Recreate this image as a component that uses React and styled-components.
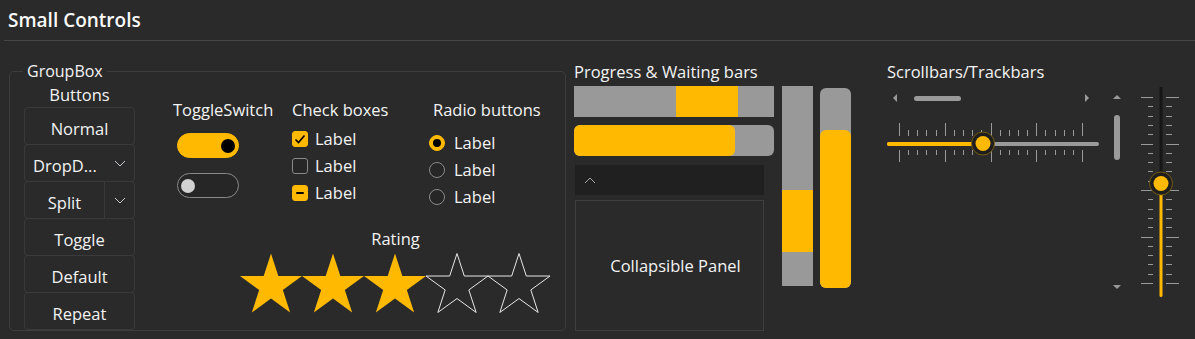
import React from "react";
import styled, { createGlobalStyle } from "styled-components";

const ACCENT = "#ffb900";

const GlobalStyle = createGlobalStyle`
	body {
		margin: 0;
		background: #2a2a2a;
		color: #f3f3f3;
		font-family: "Open Sans", "Liberation Sans", sans-serif;
		font-size: 16.5px;
	}
`;

const Page = styled.div`
	width: 1195px;
	height: 339px;
	overflow: hidden;
`;

const Header = styled.div`
	margin-left: 4px;
	height: 40px;
	border-bottom: 1px solid #464646;
	display: flex;
	align-items: center;
	padding-left: 4px;
`;

const Title = styled.h1`
	margin: 0;
	font-size: 19px;
	font-weight: 600;
	color: #fafafa;
`;

const Content = styled.div`
	display: flex;
	align-items: flex-start;
	padding-left: 9px;
`;

// GroupBox
const GroupBox = styled.fieldset`
	box-sizing: border-box;
	margin: 20px 0 0 0;
	padding: 0;
	width: 557px;
	height: 270px;
	border: 1px solid #3d3d3d;
	border-radius: 5px;
	min-width: 0;
`;

const Legend = styled.legend`
	margin-left: 13px;
	padding: 0 4px;
	line-height: 20px;
	font-size: 16px;
`;

const GroupInner = styled.div`
	display: flex;
	align-items: flex-start;
`;

const ButtonsCol = styled.div`
	margin-left: 14px;
	width: 111px;
	display: flex;
	flex-direction: column;
`;

const ColLabel = styled.div`
	line-height: 22px;
	text-align: ${(p) => p.$align || "left"};
	padding-left: ${(p) => p.$indent || 0}px;
	white-space: nowrap;
`;

const ButtonsLabel = styled(ColLabel)`
	margin-top: 3px;
`;

const ButtonStack = styled.div`
	margin-top: 1px;
	display: flex;
	flex-direction: column;
`;

const Btn = styled.div`
	box-sizing: border-box;
	height: 38px;
	border: 1px solid #3a3a3a;
	border-radius: 4px;
	display: flex;
	align-items: center;
	justify-content: center;
	padding-top: 4px;
	& + & {
		margin-top: -1px;
	}
`;

const DropBtn = styled(Btn)`
	justify-content: space-between;
	padding-left: 8px;
`;

const SplitMain = styled.div`
	flex: 1;
	align-self: stretch;
	margin-top: -4px;
	padding-top: 4px;
	display: flex;
	align-items: center;
	justify-content: center;
	border-right: 1px solid #3a3a3a;
`;

const ArrowPart = styled.div`
	width: 29px;
	margin-top: -4px;
	display: flex;
	align-items: center;
	justify-content: center;
`;

const RightArea = styled.div`
	padding-top: 18px;
	display: flex;
	flex-direction: column;
`;

const ControlsRow = styled.div`
	display: flex;
	align-items: flex-start;
`;

const ToggleCol = styled.div`
	margin-left: 38px;
	width: 119px;
	display: flex;
	flex-direction: column;
`;

const Toggle = styled.div`
	box-sizing: border-box;
	margin-left: 4px;
	margin-top: ${(p) => p.$gap}px;
	width: 62px;
	height: 25px;
	border-radius: 13px;
	background: ${(p) => (p.$on ? ACCENT : "#262626")};
	border: 1px solid ${(p) => (p.$on ? ACCENT : "#8a8a8a")};
	display: flex;
	align-items: center;
	justify-content: ${(p) => (p.$on ? "flex-end" : "flex-start")};
	padding: 0 3px;
`;

const Knob = styled.div`
	width: 14px;
	height: 14px;
	border-radius: 50%;
	background: ${(p) => (p.$on ? "#000" : "#d2d2d2")};
`;

const CheckCol = styled.div`
	width: 137px;
	display: flex;
	flex-direction: column;
`;

const ItemList = styled.div`
	margin-top: ${(p) => p.$top}px;
	display: flex;
	flex-direction: column;
`;

const ItemRow = styled.div`
	height: 27px;
	display: flex;
	align-items: center;
	gap: ${(p) => p.$gap}px;
`;

const Box = styled.div`
	box-sizing: border-box;
	width: 16px;
	height: 16px;
	border-radius: 3px;
	background: ${(p) => (p.$state ? ACCENT : "#262626")};
	border: 1px solid ${(p) => (p.$state ? ACCENT : "#8a8a8a")};
	display: flex;
	align-items: center;
	justify-content: center;
`;

const Dash = styled.div`
	width: 8px;
	height: 2px;
	border-radius: 1px;
	background: #000;
`;

const RadioCol = styled.div`
	display: flex;
	flex-direction: column;
`;

const Radio = styled.div`
	box-sizing: border-box;
	width: 16px;
	height: 16px;
	border-radius: 50%;
	background: ${(p) => (p.$on ? ACCENT : "#262626")};
	border: 1px solid ${(p) => (p.$on ? ACCENT : "#8a8a8a")};
	display: flex;
	align-items: center;
	justify-content: center;
	&::after {
		content: "";
		display: ${(p) => (p.$on ? "block" : "none")};
		width: 8px;
		height: 8px;
		border-radius: 50%;
		background: #000;
	}
`;

const RatingBlock = styled.div`
	margin-left: 105px;
	margin-top: 18px;
	width: 311px;
	display: flex;
	flex-direction: column;
`;

const Stars = styled.div`
	margin-top: 3px;
	display: flex;
`;

// Progress section
const Section = styled.div`
	margin-left: ${(p) => p.$left}px;
	margin-top: 20px;
	display: flex;
	flex-direction: ${(p) => p.$dir || "column"};
	align-items: flex-start;
`;

const SectionTitle = styled.div`
	line-height: 22px;
	white-space: nowrap;
`;

const BarsRow = styled.div`
	display: flex;
	align-items: flex-start;
`;

const BarsCol = styled.div`
	width: 200px;
	display: flex;
	flex-direction: column;
`;

const HBar = styled.div`
	margin-top: ${(p) => p.$top}px;
	height: 31px;
	background: #999;
	border-radius: ${(p) => (p.$round ? 6 : 0)}px;
	display: flex;
`;

const Fill = styled.div`
	background: ${ACCENT};
	border-radius: ${(p) => (p.$round ? 6 : 0)}px;
`;

const ExpanderHeader = styled.div`
	margin-top: 9px;
	margin-left: 1px;
	width: 189px;
	height: 30px;
	background: #202020;
	display: flex;
	align-items: center;
	padding-left: 9px;
	box-sizing: border-box;
`;

const Panel = styled.div`
	box-sizing: border-box;
	margin-top: 5px;
	margin-left: 1px;
	width: 189px;
	height: 131px;
	border: 1px solid #3f3f3f;
	display: flex;
	align-items: center;
	justify-content: center;
	padding-left: 12px;
`;

const VBar = styled.div`
	margin-left: ${(p) => p.$left}px;
	margin-top: ${(p) => p.$top}px;
	width: 31px;
	height: 200px;
	background: #999;
	border-radius: ${(p) => (p.$round ? 6 : 0)}px;
	display: flex;
	flex-direction: column;
`;

// Scrollbars section
const ScrollLeft = styled.div`
	width: 212px;
	display: flex;
	flex-direction: column;
`;

const HScroll = styled.div`
	margin-top: 8px;
	height: 14px;
	display: flex;
	align-items: center;
	padding: 0 10px 0 6px;
`;

const Arrow = styled.div`
	width: 0;
	height: 0;
	border-style: solid;
	border-color: transparent;
	${(p) =>
		p.$dir === "left" &&
		`border-width: 4px 4px 4px 0; border-right-color: #9a9a9a;`}
	${(p) =>
		p.$dir === "right" &&
		`border-width: 4px 0 4px 4px; border-left-color: #9a9a9a; margin-left: auto;`}
	${(p) =>
		p.$dir === "up" &&
		`border-width: 0 4px 4px 4px; border-bottom-color: #9a9a9a;`}
	${(p) =>
		p.$dir === "down" &&
		`border-width: 4px 4px 0 4px; border-top-color: #9a9a9a; margin-top: auto;`}
`;

const HThumb = styled.div`
	margin-left: 17px;
	width: 47px;
	height: 5px;
	border-radius: 3px;
	background: #9a9a9a;
`;

const VScroll = styled.div`
	margin-left: 11px;
	margin-top: 34px;
	width: 14px;
	height: 194px;
	display: flex;
	flex-direction: column;
	align-items: center;
`;

const VThumb = styled.div`
	margin-top: 16px;
	width: 6px;
	height: 45px;
	border-radius: 3px;
	background: #9a9a9a;
`;

const TrackSvg = styled.svg`
	display: block;
	margin-top: ${(p) => p.$top}px;
	margin-left: ${(p) => p.$left || 0}px;
	flex-shrink: 0;
`;

const Chevron = ({ up }) => (
	<svg width="12" height="7" viewBox="0 0 12 7">
		<path
			d={up ? "M1 6 L6 1 L11 6" : "M1 1 L6 6 L11 1"}
			fill="none"
			stroke={up ? "#a8a8a8" : "#c8ccd2"}
			strokeWidth="1"
		/>
	</svg>
);

const starPoints = () => {
	const R = 32.6;
	const r = R * 0.382;
	const cx = 31;
	const cy = R + 0.5;
	const pts = [];
	for (let i = 0; i < 10; i++) {
		const a = ((-90 + i * 36) * Math.PI) / 180;
		const rad = i % 2 === 0 ? R : r;
		pts.push(`${(cx + rad * Math.cos(a)).toFixed(2)},${(cy + rad * Math.sin(a)).toFixed(2)}`);
	}
	return pts.join(" ");
};

const Star = ({ filled }) => (
	<svg width="62" height="60" viewBox="0 0 62 60">
		<polygon
			points={starPoints()}
			fill={filled ? ACCENT : "none"}
			stroke={filled ? "none" : "#e8e8e8"}
			strokeWidth="1"
		/>
	</svg>
);

const HTrackbar = () => {
	const ticks = Array.from({ length: 21 }, (_, i) => i);
	return (
		<TrackSvg $top={16} width="212" height="44" viewBox="0 0 212 44">
			{ticks.map((i) => {
				const x = 12.5 + Math.round(i * 9.15);
				const long = i % 5 === 0;
				return (
					<g key={i} stroke="#9a9a9a" strokeWidth="1">
						<line x1={x} y1={long ? 2 : 9} x2={x} y2={15} />
						<line x1={x} y1={29} x2={x} y2={long ? 41 : 34} />
					</g>
				);
			})}
			<rect x="0" y="21" width="212" height="4" rx="2" fill="#9a9a9a" />
			<rect x="0" y="21" width="95" height="4" rx="2" fill={ACCENT} />
			<circle cx="96" cy="22.5" r="11.5" fill="#1e1e1e" stroke="#8a6a10" strokeWidth="0.8" />
			<circle cx="96" cy="22.5" r="7.5" fill={ACCENT} />
		</TrackSvg>
	);
};

const VTrackbar = () => {
	const ticks = Array.from({ length: 21 }, (_, i) => i);
	return (
		<TrackSvg $top={24} $left={14} width="46" height="215" viewBox="0 0 46 215">
			{ticks.map((i) => {
				const y = 12.5 + Math.round(i * 9.3);
				const long = i % 5 === 0;
				return (
					<g key={i} stroke="#9a9a9a" strokeWidth="1">
						<line x1={long ? 3 : 10} y1={y} x2={15} y2={y} />
						<line x1={28} y1={y} x2={long ? 41 : 34} y2={y} />
					</g>
				);
			})}
			<rect x="21.5" y="2" width="3" height="100" fill="#161616" />
			<rect x="21.5" y="98" width="3" height="114" rx="1.5" fill={ACCENT} />
			<circle cx="23" cy="98.5" r="11.5" fill="#1e1e1e" stroke="#8a6a10" strokeWidth="0.8" />
			<circle cx="23" cy="98.5" r="7.5" fill={ACCENT} />
		</TrackSvg>
	);
};

const App = () => {
	return (
		<Page>
			<GlobalStyle />
			<Header>
				<Title>Small Controls</Title>
			</Header>
			<Content>
				<GroupBox>
					<Legend>GroupBox</Legend>
					<GroupInner>
						<ButtonsCol>
							<ButtonsLabel $align="center">Buttons</ButtonsLabel>
							<ButtonStack>
								<Btn>Normal</Btn>
								<DropBtn>
									<span>DropD...</span>
									<ArrowPart>
										<Chevron />
									</ArrowPart>
								</DropBtn>
								<Btn>
									<SplitMain>Split</SplitMain>
									<ArrowPart>
										<Chevron />
									</ArrowPart>
								</Btn>
								<Btn>Toggle</Btn>
								<Btn>Default</Btn>
								<Btn>Repeat</Btn>
							</ButtonStack>
						</ButtonsCol>
						<RightArea>
							<ControlsRow>
								<ToggleCol>
									<ColLabel>ToggleSwitch</ColLabel>
									<Toggle $on $gap={12}>
										<Knob $on />
									</Toggle>
									<Toggle $gap={15}>
										<Knob />
									</Toggle>
								</ToggleCol>
								<CheckCol>
									<ColLabel>Check boxes</ColLabel>
									<ItemList $top={4}>
										<ItemRow $gap={7}>
											<Box $state="checked">
												<svg width="14" height="14" viewBox="0 0 14 14">
													<path d="M2.5 7.5 L5.5 10.5 L11.5 3.5" fill="none" stroke="#000" strokeWidth="1.6" />
												</svg>
											</Box>
											Label
										</ItemRow>
										<ItemRow $gap={7}>
											<Box />
											Label
										</ItemRow>
										<ItemRow $gap={7}>
											<Box $state="mixed">
												<Dash />
											</Box>
											Label
										</ItemRow>
									</ItemList>
								</CheckCol>
								<RadioCol>
									<ColLabel $indent={4}>Radio buttons</ColLabel>
									<ItemList $top={8}>
										<ItemRow $gap={9}>
											<Radio $on />
											Label
										</ItemRow>
										<ItemRow $gap={9}>
											<Radio />
											Label
										</ItemRow>
										<ItemRow $gap={9}>
											<Radio />
											Label
										</ItemRow>
									</ItemList>
								</RadioCol>
							</ControlsRow>
							<RatingBlock>
								<ColLabel $align="center">Rating</ColLabel>
								<Stars>
									<Star filled />
									<Star filled />
									<Star filled />
									<Star />
									<Star />
								</Stars>
							</RatingBlock>
						</RightArea>
					</GroupInner>
				</GroupBox>

				<Section $left={8}>
					<SectionTitle>Progress &amp; Waiting bars</SectionTitle>
					<BarsRow>
						<BarsCol>
							<HBar $top={3}>
								<Fill style={{ marginLeft: 102, width: 62 }} />
							</HBar>
							<HBar $top={8} $round>
								<Fill $round style={{ width: 161 }} />
							</HBar>
							<ExpanderHeader>
								<Chevron up />
							</ExpanderHeader>
							<Panel>Collapsible Panel</Panel>
						</BarsCol>
						<VBar $left={8} $top={3}>
							<Fill style={{ marginTop: 104, height: 62 }} />
						</VBar>
						<VBar $left={7} $top={5} $round>
							<Fill $round style={{ marginTop: 42, height: 158 }} />
						</VBar>
					</BarsRow>
				</Section>

				<Section $left={36} $dir="row">
					<ScrollLeft>
						<SectionTitle>Scrollbars/Trackbars</SectionTitle>
						<HScroll>
							<Arrow $dir="left" />
							<HThumb />
							<Arrow $dir="right" />
						</HScroll>
						<HTrackbar />
					</ScrollLeft>
					<VScroll>
						<Arrow $dir="up" />
						<VThumb />
						<Arrow $dir="down" />
					</VScroll>
					<VTrackbar />
				</Section>
			</Content>
		</Page>
	);
};

export default App;
